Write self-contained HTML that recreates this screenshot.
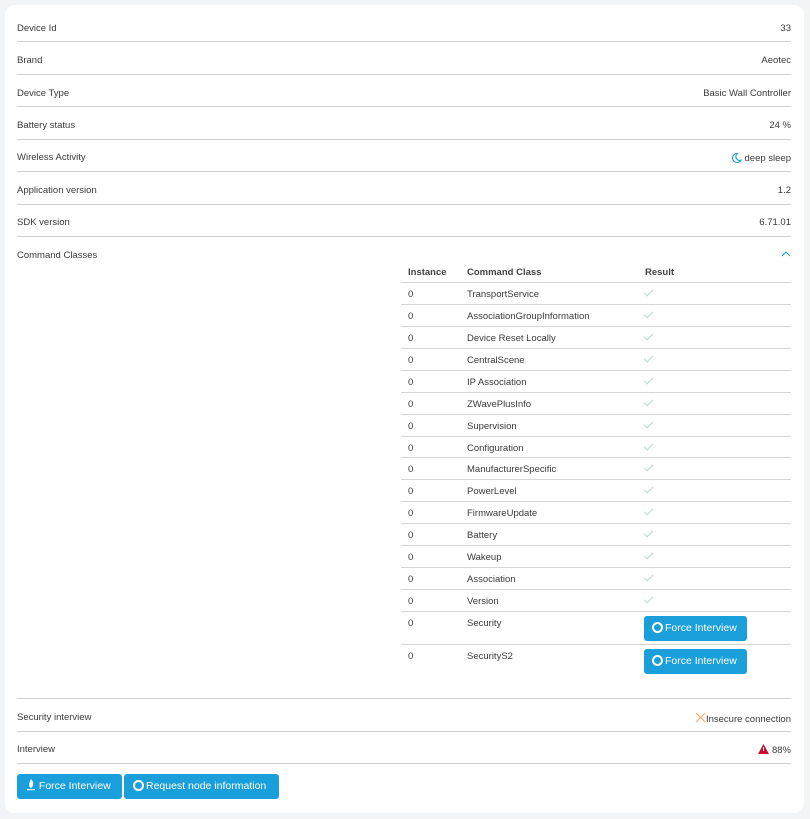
<!DOCTYPE html>
<html><head><style>
body{margin:0;width:810px;height:819px;background:#f3f4f7;font-family:"Liberation Sans",sans-serif;font-size:9.5px;color:#3a3a3a;position:relative;overflow:hidden}
.card{position:absolute;left:5px;top:5px;width:799px;height:808px;background:#fff;border-radius:10px}
.t{position:absolute;line-height:12px;white-space:nowrap;margin-top:2px}
.r{position:absolute;right:19px;line-height:12px;white-space:nowrap;text-align:right;margin-top:2px}
.ln{position:absolute;left:17px;width:774px;height:1px;background:#cfcfcf}
.tl{position:absolute;left:401px;width:390px;height:1px;background:#d6d6d6}
.b{position:absolute;background:#1a9fdb;color:#fff;border-radius:3px;font-size:10.5px;line-height:25px;height:25px;white-space:nowrap}
.ring{display:inline-block;width:7px;height:7px;border:2px solid #fff;border-radius:50%;vertical-align:-2px;margin-right:2px}
.ck{position:absolute;left:644px;width:8px;height:4px;border-left:1px solid #b8d8d0;border-bottom:1px solid #b8d8d0;transform:rotate(-45deg)}
</style></head><body>
<div class="card"></div>
<div class="t" style="left:17px;top:21px">Device Id</div><div class="r" style="top:21px">33</div><div class="ln" style="top:41px"></div>
<div class="t" style="left:17px;top:53px">Brand</div><div class="r" style="top:53px">Aeotec</div><div class="ln" style="top:74px"></div>
<div class="t" style="left:17px;top:86px">Device Type</div><div class="r" style="top:86px">Basic Wall Controller</div><div class="ln" style="top:106px"></div>
<div class="t" style="left:17px;top:118px">Battery status</div><div class="r" style="top:118px">24 %</div><div class="ln" style="top:139px"></div>
<div class="t" style="left:17px;top:150px">Wireless Activity</div><div class="r" style="top:150px"><svg width="11" height="11" viewBox="0 0 12 12" style="vertical-align:-2px"><path d="M7 1.5A5 5 0 1 0 11 9 4.3 4.3 0 0 1 7 1.5Z" fill="none" stroke="#1a9fdb" stroke-width="1.2"/></svg> deep sleep</div><div class="ln" style="top:171px"></div>
<div class="t" style="left:17px;top:183px">Application version</div><div class="r" style="top:183px">1.2</div><div class="ln" style="top:204px"></div>
<div class="t" style="left:17px;top:215px">SDK version</div><div class="r" style="top:215px">6.71.01</div><div class="ln" style="top:236px"></div>
<div class="t" style="left:17px;top:248px">Command Classes</div>
<svg style="position:absolute;left:781px;top:251px" width="10" height="6"><path d="M1 5L5 1L9 5" fill="none" stroke="#1a9fdb" stroke-width="1"/></svg>
<div class="t" style="left:408px;top:265px;font-weight:bold;color:#444">Instance</div>
<div class="t" style="left:467px;top:265px;font-weight:bold;color:#444">Command Class</div>
<div class="t" style="left:645px;top:265px;font-weight:bold;color:#444">Result</div>
<div class="tl" style="top:282px"></div>
<div id="rows"></div>
<script>
var n=["TransportService","AssociationGroupInformation","Device Reset Locally","CentralScene","IP Association","ZWavePlusInfo","Supervision","Configuration","ManufacturerSpecific","PowerLevel","FirmwareUpdate","Battery","Wakeup","Association","Version"];
var h="";
for(var i=0;i<n.length;i++){var y=282+i*21.93;
h+='<div class="t" style="left:408px;top:'+(y+5)+'px">0</div><div class="t" style="left:467px;top:'+(y+5)+'px">'+n[i]+'</div><div class="ck" style="top:'+(y+7)+'px"></div><div class="tl" style="top:'+Math.round(y+21.93)+'px"></div>';}
document.getElementById("rows").innerHTML=h;
</script>
<div class="t" style="left:408px;top:616px">0</div><div class="t" style="left:467px;top:616px">Security</div>
<div class="b" style="left:644px;top:616px;width:103px"><span style="margin-left:8px" class="ring"></span>Force Interview</div>
<div class="tl" style="top:644px"></div>
<div class="t" style="left:408px;top:649px">0</div><div class="t" style="left:467px;top:649px">SecurityS2</div>
<div class="b" style="left:644px;top:649px;width:103px"><span style="margin-left:8px" class="ring"></span>Force Interview</div>
<div class="ln" style="top:698px"></div>
<div class="t" style="left:17px;top:710px">Security interview</div>
<div class="r" style="top:710px"><svg width="11" height="11" style="vertical-align:-1px"><path d="M1 1L10 10M10 1L1 10" stroke="#f0b070" stroke-width="1.2"/></svg>Insecure connection</div>
<div class="ln" style="top:731px"></div>
<div class="t" style="left:17px;top:742px">Interview</div>
<div class="r" style="top:742px"><svg width="11" height="10" style="vertical-align:-1px"><path d="M5.5 0L11 10H0Z" fill="#c8102e"/><rect x="5" y="3" width="1" height="4" fill="#fff"/></svg> 88%</div>
<div class="ln" style="top:763px"></div>
<div class="b" style="left:17px;top:774px;width:105px"><svg width="10" height="13" style="margin-left:9px;vertical-align:-2px"><path d="M5 1C8 4 8 8 5 10C3 9 2 7 5 1Z" fill="#fff"/><rect x="1" y="11" width="8" height="1.2" fill="#fff"/></svg> Force Interview</div>
<div class="b" style="left:124px;top:774px;width:155px"><span style="margin-left:9px" class="ring"></span>Request node information</div>
</body></html>
